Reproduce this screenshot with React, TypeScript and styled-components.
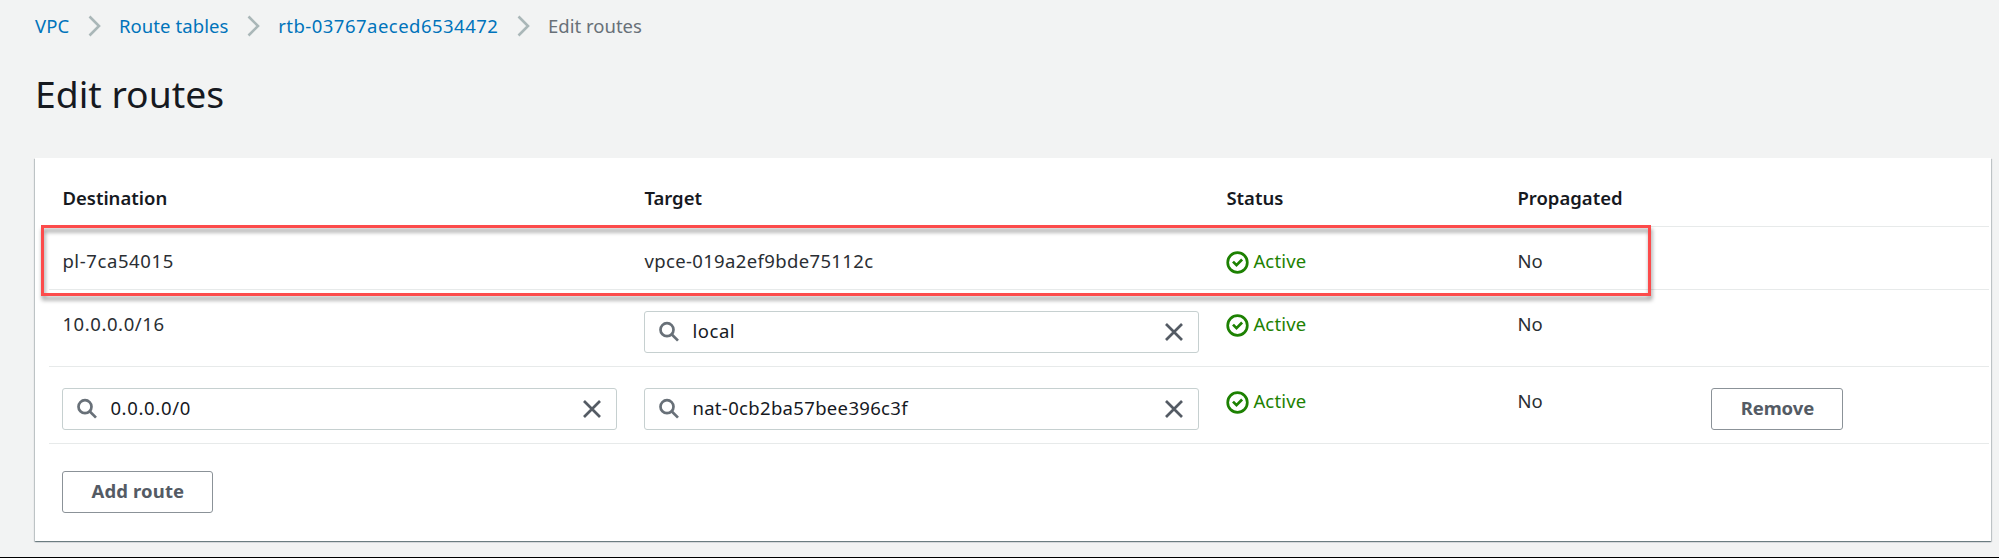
import React from 'react';
import styled, { createGlobalStyle } from 'styled-components';

const GlobalStyle = createGlobalStyle`
  * { box-sizing: border-box; }
  body {
    margin: 0;
    background: #f2f3f3;
    color: #16191f;
    font: 400 18.5px/28px 'Noto Sans', 'Open Sans', sans-serif;
  }
`;

const Page = styled.main`
  height: 558px;
  padding: 12px 8px 0 35px;
  border-bottom: 1px solid #000;
  overflow: hidden;
`;

const Breadcrumbs = styled.nav`
  display: flex;
  align-items: center;
  height: 28px;
`;

const Crumb = styled.a<{ $spacing?: number }>`
  color: #0073bb;
  letter-spacing: ${({ $spacing = 0.08 }) => $spacing}px;
  text-decoration: none;
`;

const CurrentCrumb = styled.span`
  color: #687078;
`;

const Chevron = styled.svg`
  width: 13px;
  height: 22px;
  margin: 0 18px 0 18.7px;
  fill: none;
  stroke: #aab7b8;
  stroke-width: 2.6;
`;

const Title = styled.h1`
  margin: 29px 0 39px;
  font-size: 37.3px;
  font-weight: 400;
  line-height: 50px;
`;

const Card = styled.section`
  height: 383px;
  padding: 0 2px 28px 14px;
  background: #fff;
  box-shadow:
    0 1px 1px rgba(0, 28, 36, 0.35),
    1px 1px 1px rgba(0, 28, 36, 0.17),
    -1px 1px 1px rgba(0, 28, 36, 0.17);
`;

const Row = styled.div`
  position: relative;
  display: grid;
  grid-template-columns: 582px 582px 291px 194px 1fr;
  grid-auto-rows: minmax(28px, auto);
  align-items: start;
  padding: 21px 0 13px 13.4px;
  border-bottom: 1px solid #e7eaea;
`;

const HeaderRow = styled(Row)`
  padding-top: 26px;
  padding-bottom: 14px;
  font-weight: 600;
`;

const Value = styled.span<{ $spacing?: number }>`
  margin-top: -1px;
  letter-spacing: ${({ $spacing = 0 }) => $spacing}px;
  color: #2a2e33;
`;

const Status = styled.span`
  display: flex;
  align-items: center;
  gap: 4px;
  height: 28px;
  color: #1d8102;
`;

const StatusLabel = styled.span`
  margin-top: -2px;
  letter-spacing: 0.15px;
`;

const StatusIcon = styled.svg`
  width: 23px;
  height: 23px;
  fill: none;
  stroke: currentColor;
  stroke-width: 2.7;
`;

const Field = styled.div`
  display: flex;
  align-items: center;
  width: 555px;
  height: 42px;
  padding: 0 12px 0 11px;
  border: 1px solid #c6d0d0;
  border-radius: 3px;
`;

const FieldText = styled.span<{ $spacing: number }>`
  flex: 1;
  margin-left: 11px;
  padding-bottom: 2px;
  color: #16191f;
  letter-spacing: ${({ $spacing }) => $spacing}px;
`;

const SearchIcon = styled.svg`
  width: 24px;
  height: 24px;
  margin-left: 1px;
  fill: none;
  stroke: #687078;
  stroke-width: 2.7;
`;

const ClearIcon = styled.svg`
  width: 24px;
  height: 24px;
  fill: none;
  stroke: #545b64;
  stroke-width: 2.7;
`;

const Button = styled.button<{ $width: number; $spacing: number }>`
  width: ${({ $width }) => $width}px;
  height: 42px;
  padding: 0 0 2px;
  border: 1px solid #8b9298;
  border-radius: 3px;
  background: #fff;
  color: #545b64;
  font: inherit;
  font-weight: 700;
  letter-spacing: ${({ $spacing }) => $spacing}px;
`;

const Footer = styled.div`
  padding: 27px 0 0 13.4px;
`;

/* Red annotation frame drawn over the first route. */
const Highlight = styled.div`
  position: absolute;
  inset: -2px auto auto -8px;
  width: 1610px;
  height: 71px;
  border: 3px solid #fc4b4b;
  filter: drop-shadow(1px 4px 2px rgba(0, 0, 0, 0.42));
  pointer-events: none;
`;

const Separator = () => (
  <Chevron viewBox="0 0 13 22">
    <path d="M1.5 1.5 11 11 1.5 20.5" />
  </Chevron>
);

const ActiveStatus = () => (
  <Status>
    <StatusIcon viewBox="0 0 23 23">
      <circle cx="11.5" cy="11.5" r="9.8" />
      <path d="M7 10.6l3.5 3.5 5.6-5.6" />
    </StatusIcon>
    <StatusLabel>Active</StatusLabel>
  </Status>
);

const SearchField = ({ value, spacing }: { value: string; spacing: number }) => (
  <Field>
    <SearchIcon viewBox="0 0 24 24">
      <circle cx="10" cy="9.7" r="6.5" />
      <path d="M14.6 14.2l6.4 6.4" />
    </SearchIcon>
    <FieldText $spacing={spacing}>{value}</FieldText>
    <ClearIcon viewBox="0 0 24 24">
      <path d="M4 4l16 16M20 4L4 20" />
    </ClearIcon>
  </Field>
);

export default function App() {
  return (
    <>
      <GlobalStyle />
      <Page>
        <Breadcrumbs>
          <Crumb>VPC</Crumb>
          <Separator />
          <Crumb>Route tables</Crumb>
          <Separator />
          <Crumb $spacing={0.48}>rtb-03767aeced6534472</Crumb>
          <Separator />
          <CurrentCrumb>Edit routes</CurrentCrumb>
        </Breadcrumbs>
        <Title>Edit routes</Title>
        <Card>
          <HeaderRow>
            <span>Destination</span>
            <span>Target</span>
            <span>Status</span>
            <span>Propagated</span>
          </HeaderRow>
          <Row>
            <Value $spacing={0.6}>pl-7ca54015</Value>
            <Value $spacing={0.36}>vpce-019a2ef9bde75112c</Value>
            <ActiveStatus />
            <Value>No</Value>
            <Highlight />
          </Row>
          <Row>
            <Value $spacing={0.58}>10.0.0.0/16</Value>
            <SearchField value="local" spacing={0.55} />
            <ActiveStatus />
            <Value>No</Value>
          </Row>
          <Row>
            <SearchField value="0.0.0.0/0" spacing={0.65} />
            <SearchField value="nat-0cb2ba57bee396c3f" spacing={0.33} />
            <ActiveStatus />
            <Value>No</Value>
            <Button $width={132} $spacing={-0.1}>Remove</Button>
          </Row>
          <Footer>
            <Button $width={151} $spacing={0.12}>Add route</Button>
          </Footer>
        </Card>
      </Page>
    </>
  );
}
